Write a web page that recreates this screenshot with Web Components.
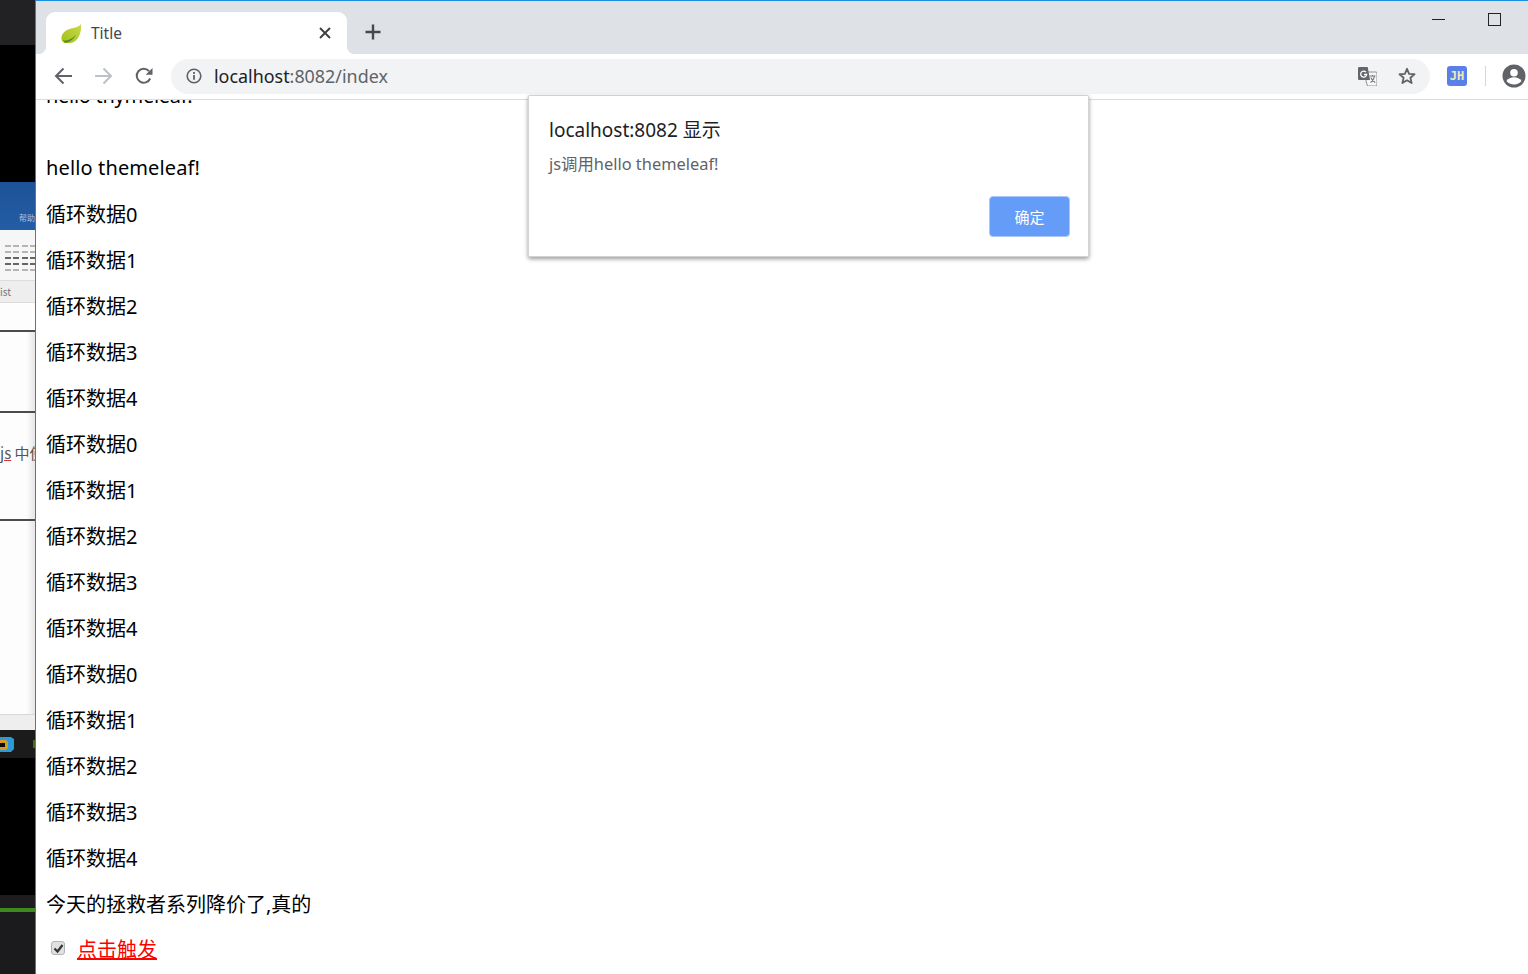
<!DOCTYPE html>
<html lang="zh">
<head>
<meta charset="utf-8">
<title>Title</title>
<style>
html, body { margin: 0; height: 100%; overflow: hidden; background: #000; }
body { display: flex; font-family: "Noto Sans", "Noto Sans CJK SC", sans-serif; }
</style>
</head>
<body>
<desktop-strip></desktop-strip>
<browser-window>
    <browser-tabs title-text="Title" slot="tabs"></browser-tabs>
    <browser-toolbar host-text="localhost" path-text=":8082/index" slot="toolbar"></browser-toolbar>
    <page-content>
        <p class="clipped">hello thymeleaf!</p>
        <p class="first">hello themeleaf!</p>
    </page-content>
    <alert-dialog origin="localhost:8082 显示" message="js调用hello themeleaf!" ok="确定" slot="overlay"></alert-dialog>
</browser-window>

<script>
// what is left of the window behind the browser
class DesktopStrip extends HTMLElement {
    constructor() {
        super();
        const shadowRoot = this.attachShadow({ mode: 'open' });
        shadowRoot.innerHTML = `
            <style>
                :host{
                    display: flex;
                    flex-direction: column;
                    flex: 0 0 35px;
                    height: 974px;
                    overflow: hidden;
                    font-family: "Noto Sans CJK SC", sans-serif;
                }
                .seg{ flex: none; overflow: hidden; white-space: nowrap; }
                .help{
                    display: flex; align-items: flex-end; justify-content: flex-end;
                    padding-bottom: 7px; box-sizing: border-box;
                    font-size: 8px; color: #a9c0dd;
                }
                .grid{
                    display: flex; flex-direction: column; gap: 4px;
                    padding: 15px 0 0 5px; box-sizing: border-box;
                }
                .grid i{
                    display: block; height: 2px;
                    background: repeating-linear-gradient(to right, #b5b5b5 0 6px, transparent 6px 8.4px);
                }
                .grid i:nth-child(3), .grid i:nth-child(4){
                    background: repeating-linear-gradient(to right, #666 0 6px, transparent 6px 8.4px);
                }
                .tool{ font-size: 10px; color: #777; line-height: 22px; border-top: 1px solid #ddd; border-bottom: 1px solid #ddd; box-sizing: border-box; }
                .rule{
                    border-top: 2px solid #4c4c4c; box-sizing: border-box;
                    background: linear-gradient(to right, #fdfdfd 75%, #e6e6e6);
                }
                .doc{
                    font-size: 15px; color: #555; line-height: 18px;
                    padding-top: 31px;
                }
                .doc u{ text-decoration-color: #d33; }
                .taskbar{ display: flex; align-items: center; justify-content: space-between; background: #1b1b1b; }
                .taskbar b{ width: 2px; height: 8px; background: #4a6a20; }
                svg{ display: block; }
            </style>
            <div class="seg" style="height:45px;background:#222224"></div>
            <div class="seg" style="height:137px;background:#000"></div>
            <div class="seg help" style="height:48px;background:linear-gradient(#1d5296,#245da6)">帮助</div>
            <div class="seg grid" style="height:50px;background:#f6f6f6"><i></i><i></i><i></i><i></i><i></i></div>
            <div class="seg tool" style="height:23px;background:#eeeeee">ist</div>
            <div class="seg" style="height:27px;background:#fdfdfd"></div>
            <div class="seg rule" style="height:81px"></div>
            <div class="seg rule doc" style="height:108px"><u>js</u> 中使</div>
            <div class="seg rule" style="height:195px"></div>
            <div class="seg" style="height:16px;background:#eeeeee;border-top:1px solid #d8d8d8;box-sizing:border-box"></div>
            <div class="seg taskbar" style="height:28px">
                <svg width="14" height="17" viewBox="0 0 14 17">
                    <path d="M0 1h11l3 2v10l-3 3H0z" fill="#2a9ad8"/>
                    <path d="M0 4h6l2 2v6l-2 2H0z" fill="#d99a1e"/>
                    <path d="M0 7h5v4H0z" fill="#0c0c0c"/>
                </svg>
                <b></b>
            </div>
            <div class="seg" style="height:137px;background:#000"></div>
            <div class="seg" style="height:13px;background:#1d1d1f"></div>
            <div class="seg" style="height:4px;background:#3e8a20"></div>
            <div class="seg" style="flex:1;background:#1b1b1d"></div>
        `;
    }
}

class BrowserWindow extends HTMLElement {
    constructor() {
        super();
        const shadowRoot = this.attachShadow({ mode: 'open' });
        shadowRoot.innerHTML = `
            <style>
                :host{
                    display: flex;
                    flex-direction: column;
                    position: relative;
                    flex: 1;
                    min-width: 0;
                    height: 974px;
                    box-sizing: border-box;
                    border-left: 1px solid #2a83d2;
                    background: #fff;
                    overflow: hidden;
                }
                .main{ flex: 1; min-height: 0; overflow: hidden; }
            </style>
            <slot name="tabs"></slot>
            <slot name="toolbar"></slot>
            <div class="main"><slot></slot></div>
            <slot name="overlay"></slot>
        `;
    }
}

class BrowserTabs extends HTMLElement {
    constructor() {
        super();
        const shadowRoot = this.attachShadow({ mode: 'open' });
        shadowRoot.innerHTML = `
            <style>
                :host{
                    display: flex;
                    align-items: flex-end;
                    flex: none;
                    position: relative;
                    height: 54px;
                    box-sizing: border-box;
                    border-top: 1px solid #1a8fe0;
                    background: #dee1e6;
                    padding-left: 10px;
                }
                .tab{
                    display: flex;
                    align-items: center;
                    position: relative;
                    width: 301px;
                    height: 42px;
                    box-sizing: border-box;
                    padding: 0 16px 1px 15px;
                    background: #fff;
                    border-radius: 9px 9px 0 0;
                    font: 15.5px "Noto Sans", sans-serif;
                    color: #45484c;
                }
                .tab::before, .tab::after{
                    content: "";
                    position: absolute;
                    bottom: 0;
                    width: 8px;
                    height: 8px;
                }
                .tab::before{ left: -8px; background: radial-gradient(circle at 0 0, #dee1e6 8px, #fff 8.5px); }
                .tab::after{ right: -8px; background: radial-gradient(circle at 100% 0, #dee1e6 8px, #fff 8.5px); }
                .title{ margin-left: 10px; flex: 1; }
                .plus{ margin-left: 18px; margin-bottom: 14px; }
                .win{
                    display: flex;
                    align-items: flex-start;
                    gap: 42px;
                    position: absolute;
                    top: 11px;
                    right: 26px;
                }
                svg{ display: block; flex: none; }
            </style>
            <div class="tab">
                <svg width="20" height="20" viewBox="0 0 20 20">
                    <defs><linearGradient id="leaf" x1="0" y1="1" x2="1" y2="0"><stop offset="0" stop-color="#a3bf1e"/><stop offset="1" stop-color="#c9da45"/></linearGradient></defs>
                    <path d="M20 1C18 4 14 4.5 10 5.5 4 7 0 11 .5 16c.2 2 1.500 3.500 3.500 4 5 .8 10-.5 13-5C19.500 11 20.500 6 20 1z" fill="url(#leaf)"/>
                    <path d="M2 17.500C7 18 12 15.500 15 11.500 13 16 8.500 19.500 4 19.800z" fill="#4f8f2a"/>
                </svg>
                <span class="title"></span>
                <svg width="12" height="12" viewBox="0 0 12 12"><path d="M1 1l10 10M11 1L1 11" stroke="#3c4043" stroke-width="1.900" fill="none"/></svg>
            </div>
            <svg class="plus" width="16" height="16" viewBox="0 0 16 16"><path d="M8 .5v15M.5 8h15" stroke="#45484c" stroke-width="2.400" fill="none"/></svg>
            <div class="win">
                <svg width="14" height="14" viewBox="0 0 14 14"><path d="M0 7.500h13" stroke="#222" fill="none"/></svg>
                <svg width="14" height="14" viewBox="0 0 14 14"><rect x=".5" y="1.500" width="12" height="12" stroke="#222" fill="none"/></svg>
            </div>
        `;
        shadowRoot.querySelector('.title').textContent = this.getAttribute('title-text');
    }
}

class BrowserToolbar extends HTMLElement {
    constructor() {
        super();
        const shadowRoot = this.attachShadow({ mode: 'open' });
        shadowRoot.innerHTML = `
            <style>
                :host{
                    display: flex;
                    align-items: center;
                    flex: none;
                    height: 46px;
                    box-sizing: border-box;
                    padding: 0 3px 1px 18px;
                    background: #fff;
                    border-bottom: 1px solid #dadce0;
                }
                .nav{ display: flex; align-items: center; gap: 22px; }
                .reload{ margin-left: 1px; }
                .omni{
                    display: flex;
                    align-items: center;
                    flex: 1;
                    height: 35px;
                    margin-left: 18px;
                    padding: 0 14px 0 15px;
                    background: #f1f3f4;
                    border-radius: 18px;
                    font: 17.9px "Noto Sans", sans-serif;
                    color: #5f6368;
                }
                .url{ flex: 1; margin-left: 12px; padding-bottom: 1px; }
                .url b{ font-weight: 400; color: #202124; }
                .omni-icons{ display: flex; align-items: center; gap: 21px; }
                .jh{
                    display: flex;
                    align-items: center;
                    justify-content: center;
                    width: 20px;
                    height: 20px;
                    margin-left: 17px;
                    border-radius: 3px;
                    background: #5b7fe9;
                    color: #e9eeb8;
                    font: 700 12px "DejaVu Sans Mono", monospace;
                }
                .sep{ width: 1px; height: 20px; margin: 0 16px 0 18px; background: #d5d7da; }
                .avatar{ margin-right: -1px; }
                svg{ display: block; flex: none; }
            </style>
            <div class="nav">
                <svg width="18" height="18" viewBox="0 0 18 18"><path d="M18 9H2M9.500 1.500L2 9l7.500 7.500" stroke="#5f6368" stroke-width="2" fill="none"/></svg>
                <svg width="18" height="18" viewBox="0 0 18 18"><path d="M1 9h16M9.500 1.500L17 9l-7.500 7.500" stroke="#bdc1c6" stroke-width="2" fill="none"/></svg>
                <svg class="reload" width="18" height="18" viewBox="0 0 18 18"><path d="M15.200 11.500A7 7 0 1 1 14 4.100" stroke="#5f6368" stroke-width="2" fill="none"/><path d="M17.500 1v6.800h-6.800z" fill="#5f6368"/></svg>
            </div>
            <div class="omni">
                <svg width="16" height="16" viewBox="0 0 16 16"><circle cx="8" cy="8" r="6.800" stroke="#5f6368" stroke-width="1.600" fill="none"/><path d="M7.100 7h1.800v4.800H7.100zM7.100 4.100h1.800v1.800H7.100z" fill="#5f6368"/></svg>
                <span class="url"><b></b><span></span></span>
                <div class="omni-icons">
                    <svg width="19" height="19" viewBox="0 0 19 19">
                        <path d="M8 5h10a1 1 0 0 1 1 1v12a1 1 0 0 1-1 1H9.500L8 14z" fill="#f7f7f7" stroke="#777" stroke-width=".8"/>
                        <path d="M1.300 0h8.400L12 13H1.300A1.300 1.300 0 0 1 0 11.700V1.300A1.300 1.300 0 0 1 1.300 0z" fill="#62666a"/>
                        <path d="M8 5.200a3 3 0 1 0 .7 2.300H6" stroke="#fff" stroke-width="1.300" fill="none"/>
                        <path d="M11.500 9h6M14.500 8v1.200M12.500 15.500c2.500-1.500 3.500-3.500 4-6.500M12.800 10.500c.8 2 2 3.500 4.400 5" stroke="#777" stroke-width="1.100" fill="none"/>
                    </svg>
                    <svg width="18" height="18" viewBox="0 0 18 18"><path d="M9 1.800l2.100 5 5.400.45-4.100 3.550 1.250 5.300L9 13.300l-4.650 2.800 1.250-5.300L1.500 7.250l5.400-.45z" stroke="#5f6368" stroke-width="1.800" stroke-linejoin="round" fill="none"/></svg>
                </div>
            </div>
            <div class="jh">JH</div>
            <div class="sep"></div>
            <svg class="avatar" width="24" height="24" viewBox="0 0 24 24"><circle cx="12" cy="12" r="11.500" fill="#5f6368"/><circle cx="12" cy="8.700" r="3.800" fill="#fff"/><path d="M4.500 17c1.600-2.600 4.600-3.800 7.500-3.800s5.900 1.200 7.500 3.800c-1.700 2.100-4.400 3.400-7.500 3.400S6.200 19.100 4.500 17z" fill="#fff"/></svg>
        `;
        shadowRoot.querySelector('.url b').textContent = this.getAttribute('host-text');
        shadowRoot.querySelector('.url span').textContent = this.getAttribute('path-text');
    }
}

class DataRow extends HTMLElement {
    constructor() {
        super();
        const shadowRoot = this.attachShadow({ mode: 'open' });
        shadowRoot.innerHTML = `
            <style>
                :host{
                    display: block;
                    height: 26px;
                    line-height: 26px;
                    margin-bottom: 20px;
                }
            </style>
            <slot></slot>
        `;
    }
}

class PageContent extends HTMLElement {
    constructor() {
        super();
        const shadowRoot = this.attachShadow({ mode: 'open' });
        shadowRoot.innerHTML = `
            <style>
                :host{
                    display: block;
                    margin-top: -17px;
                    padding-left: 10px;
                    font: 20px/26px "Noto Sans", "Noto Sans CJK SC", sans-serif;
                    color: #000;
                }
                ::slotted(p){ margin: 0; height: 26px; }
                ::slotted(p.clipped){ margin-bottom: 46px; letter-spacing: -.28px; }
                ::slotted(p.first){ margin-bottom: 21px; letter-spacing: .13px; }
                .check{
                    display: flex;
                    align-items: center;
                    height: 26px;
                    margin-top: -1px;
                }
                .box{
                    display: flex;
                    align-items: center;
                    justify-content: center;
                    width: 12px;
                    height: 12px;
                    margin: 0 0 4px 5px;
                    border: 1px solid #b4b4b4;
                    border-radius: 3px;
                    background: #e0e0e0;
                }
                a{ margin-left: 12px; color: #f00; text-decoration: underline; }
            </style>
            <slot></slot>
            <div id="rows"></div>
            <data-row>今天的拯救者系列降价了,真的</data-row>
            <div class="check">
                <span class="box"><svg width="11" height="11" viewBox="0 0 11 11"><path d="M1.500 5.500l3 3 5-6.500" stroke="#333" stroke-width="2.200" fill="none"/></svg></span>
                <a href="#">点击触发</a>
            </div>
        `;
        // three loops of the same five rows, as the template prints them
        const rows = shadowRoot.getElementById('rows');
        for (let loop = 0; loop < 3; loop++) {
            for (let i = 0; i < 5; i++) {
                const row = document.createElement('data-row');
                row.textContent = '循环数据' + i;
                rows.appendChild(row);
            }
        }
    }
}

class AlertDialog extends HTMLElement {
    constructor() {
        super();
        const shadowRoot = this.attachShadow({ mode: 'open' });
        shadowRoot.innerHTML = `
            <style>
                :host{
                    display: flex;
                    flex-direction: column;
                    position: absolute;
                    top: 95px;
                    left: 492px;
                    width: 561px;
                    height: 162px;
                    box-sizing: border-box;
                    padding: 22px 18px 19px 20px;
                    background: #fff;
                    border: 1px solid #d4d4d4;
                    border-top-color: #d0d0d0;
                    border-radius: 2px;
                    box-shadow: 0 2px 4px rgba(0,0,0,.4);
                    font-family: "Noto Sans", "Noto Sans CJK SC", sans-serif;
                }
                .origin{ font-size: 19px; line-height: 24px; color: #202124; }
                .msg{ margin-top: 11px; font-size: 16.4px; line-height: 22px; color: #5f6368; }
                .actions{ display: flex; justify-content: flex-end; margin-top: auto; }
                button{
                    width: 81px;
                    height: 41px;
                    padding: 0;
                    border: 1px solid #a9c7fa;
                    border-radius: 4px;
                    background: #659cf8;
                    color: #fff;
                    font: 15px "Noto Sans CJK SC", sans-serif;
                }
            </style>
            <div class="origin"></div>
            <div class="msg"></div>
            <div class="actions"><button></button></div>
        `;
        shadowRoot.querySelector('.origin').textContent = this.getAttribute('origin');
        shadowRoot.querySelector('.msg').textContent = this.getAttribute('message');
        shadowRoot.querySelector('button').textContent = this.getAttribute('ok');
    }
}

customElements.define('desktop-strip', DesktopStrip);
customElements.define('browser-window', BrowserWindow);
customElements.define('browser-tabs', BrowserTabs);
customElements.define('browser-toolbar', BrowserToolbar);
customElements.define('data-row', DataRow);
customElements.define('page-content', PageContent);
customElements.define('alert-dialog', AlertDialog);
</script>
</body>
</html>
